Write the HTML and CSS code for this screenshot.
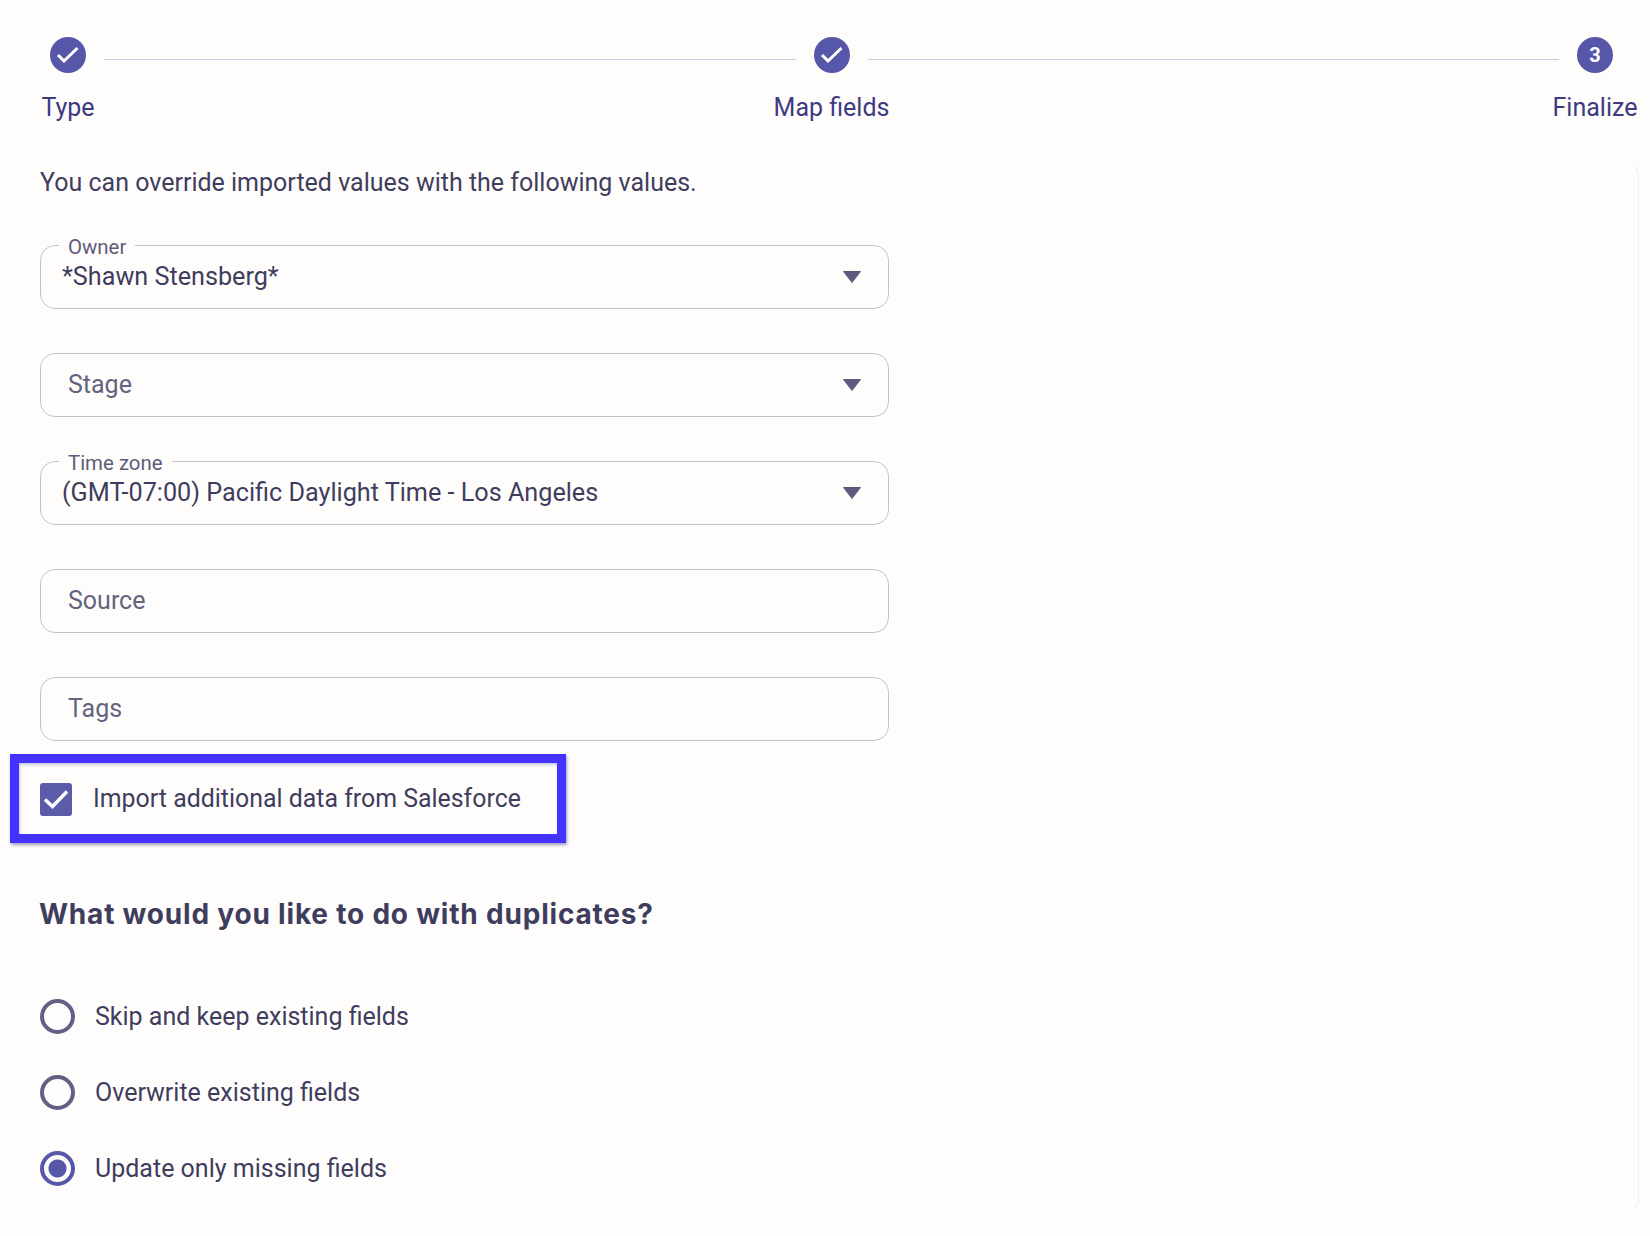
FILE: index.html
```html
<!DOCTYPE html>
<html lang="en">
<head>
<meta charset="utf-8">
<title>Import</title>
<link rel="stylesheet" href="styles.css">
</head>
<body>
<nav class="stepper">
  <div class="step">
    <span class="dot"><svg viewBox="0 0 24 24" width="24" height="24"><path d="M2 12l6 6L21.500 5" class="tick"/></svg></span>
    <span class="step-label">Type</span>
  </div>
  <div class="step-line"></div>
  <div class="step">
    <span class="dot"><svg viewBox="0 0 24 24" width="24" height="24"><path d="M2 12l6 6L21.500 5" class="tick"/></svg></span>
    <span class="step-label">Map fields</span>
  </div>
  <div class="step-line"></div>
  <div class="step">
    <span class="dot">3</span>
    <span class="step-label">Finalize</span>
  </div>
</nav>
<main class="card">
  <p class="intro">You can override imported values with the following values.</p>
  <div class="fields">
    <div class="field">
      <span class="float-label">Owner</span>
      <span class="value">*Shawn Stensberg*</span>
      <svg class="caret" viewBox="0 0 20 14" width="20" height="14"><path d="M1.500 1.500h17l-8.500 11z"/></svg>
    </div>
    <div class="field">
      <span class="placeholder">Stage</span>
      <svg class="caret" viewBox="0 0 20 14" width="20" height="14"><path d="M1.500 1.500h17l-8.500 11z"/></svg>
    </div>
    <div class="field">
      <span class="float-label">Time zone</span>
      <span class="value">(GMT-07:00) Pacific Daylight Time - Los Angeles</span>
      <svg class="caret" viewBox="0 0 20 14" width="20" height="14"><path d="M1.500 1.500h17l-8.500 11z"/></svg>
    </div>
    <div class="field"><span class="placeholder">Source</span></div>
    <div class="field"><span class="placeholder">Tags</span></div>
  </div>
  <div class="highlight">
    <span class="checkbox"><svg viewBox="0 0 32 33" width="32" height="33"><path d="M5 16.500l7.500 7L27 8.500" class="tick tick-box"/></svg></span>
    <span class="check-label">Import additional data from Salesforce</span>
  </div>
  <h2 class="heading">What would you like to do with duplicates?</h2>
  <div class="radios">
    <div class="radio-row"><span class="radio"></span><span>Skip and keep existing fields</span></div>
    <div class="radio-row"><span class="radio"></span><span>Overwrite existing fields</span></div>
    <div class="radio-row"><span class="radio radio-on"></span><span>Update only missing fields</span></div>
  </div>
</main>
</body>
</html>
```

FILE: styles.css
```css
* { box-sizing: border-box; }
html, body { margin: 0; height: 100%; }
body {
  background: #fefdfc;
  color: #3f3d5e;
  font-family: Roboto, "Liberation Sans", sans-serif;
  font-size: 25px;
  overflow: hidden;
}
.stepper {
  display: flex;
  height: 161px;
  padding: 37px 37px 0 50px;
}
.step {
  display: flex;
  flex-direction: column;
  align-items: center;
  width: 36px;
  flex: none;
}
.dot {
  display: flex;
  flex: none;
  align-items: center;
  justify-content: center;
  width: 36px;
  height: 36px;
  border-radius: 50%;
  background: #5657a8;
  color: #fff;
  font-size: 20px;
  font-weight: 700;
}
.tick {
  fill: none;
  stroke: #fff;
  stroke-width: 3;
}
.tick-box { stroke-width: 3.4; }
.step-label {
  margin-top: 18px;
  line-height: 33px;
  font-size: 25px;
  white-space: nowrap;
  color: #3d3a80;
}
.step-line {
  flex: 1;
  height: 1px;
  margin: 22px 18px 0;
  background: #c8c8de;
}
.card {
  height: 1053px;
  margin-right: 11px;
  padding: 5px 40px 0;
  border: 1px solid #fcfafa;
  border-right-color: #f0eeef;
  border-left: 0;
  border-radius: 16px;
  background: #fefdfc;
}
.intro {
  margin: 0;
  line-height: 32px;
}
.fields {
  display: flex;
  flex-direction: column;
  gap: 44px;
  width: 849px;
  margin-top: 46px;
}
.field {
  position: relative;
  display: flex;
  align-items: center;
  height: 64px;
  padding: 0 26px 1px 21px;
  border: 1px solid #c4c3c9;
  border-radius: 15px;
}
.float-label {
  position: absolute;
  top: -11px;
  left: 18px;
  padding: 0 9px;
  background: #fefdfc;
  font-size: 20.4px;
  line-height: 24px;
  color: #5d5c78;
}
.value { flex: 1; font-size: 25.2px; }
.placeholder {
  flex: 1;
  padding-left: 6px;
  color: #64637e;
}
.caret { fill: #5d5c80; stroke: #5d5c80; stroke-linejoin: round; stroke-width: 1; }
.highlight {
  display: flex;
  align-items: center;
  gap: 21px;
  width: 556px;
  height: 89px;
  margin: 13px 0 0 -30px;
  padding-left: 21px;
  border: 9px solid #4433ff;
  box-shadow: 1px 2px 3px rgba(40, 40, 120, .45), inset 1px 2px 3px rgba(40, 40, 120, .25);
}
.checkbox {
  display: flex;
  width: 32px;
  height: 33px;
  margin-top: 2px;
  border-radius: 3px;
  background: #5a5ba9;
}
.check-label { font-size: 24.9px; }
.heading {
  margin: 53px 0 0 -1px;
  font-family: Inter, "Open Sans", sans-serif;
  font-size: 28px;
  line-height: 36px;
  font-weight: 700;
  letter-spacing: .8px;
  color: #3f3d5e;
}
.radios {
  display: flex;
  flex-direction: column;
  gap: 40px;
  margin-top: 66px;
}
.radio-row {
  display: flex;
  align-items: center;
  gap: 20px;
  height: 36px;
}
.radio {
  flex: none;
  width: 35px;
  height: 35px;
  border: 4px solid #626185;
  border-radius: 50%;
}
.radio-on {
  border-color: #5657a8;
  background: radial-gradient(circle, #5657a8 0 8.500px, transparent 9.500px);
}
```
